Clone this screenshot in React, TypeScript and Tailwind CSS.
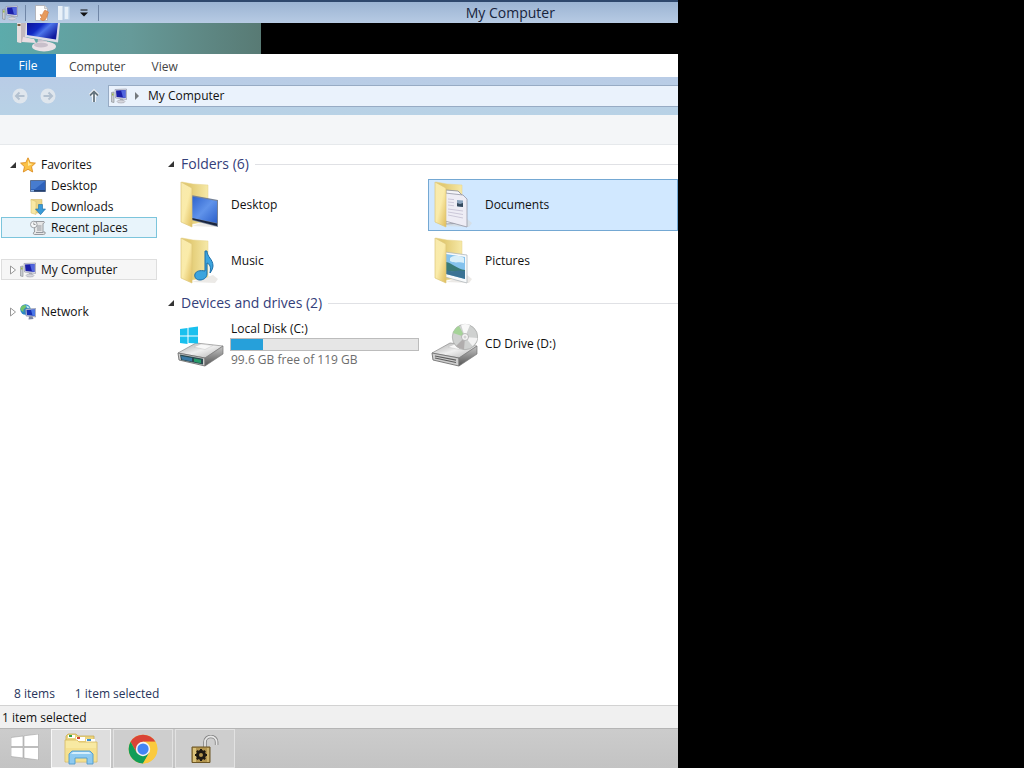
import React from 'react';

interface IconProps {
    className?: string;
}

type FolderKind = 'desktop' | 'documents' | 'music' | 'pictures';

interface FolderItem {
    name: string;
    kind: FolderKind;
    selected?: boolean;
}

const folders: FolderItem[] = [
    { name: 'Desktop', kind: 'desktop' },
    { name: 'Documents', kind: 'documents', selected: true },
    { name: 'Music', kind: 'music' },
    { name: 'Pictures', kind: 'pictures' },
];

const ComputerIcon: React.FC<IconProps> = ({ className = 'w-4 h-4' }) => (
    <svg viewBox="0 0 16 16" className={className} aria-hidden="true">
        <path d="M0.5 4.5 3 4v10.5l-2.500-.5z" fill="#c9ccd2" stroke="#85898f" strokeWidth=".6" />
        <path d="M1 5.500h1.500v2H1z" fill="#9ab84e" />
        <path d="M4 1.500 15.500 1v10.500L4.500 10z" fill="#dcdde6" stroke="#8d90a5" strokeWidth=".6" />
        <path d="M5 2.500 14.500 2v8L5.500 9z" fill="#1a1fa8" />
        <path d="M10 2.200 14.500 2v8L12 9.600z" fill="#5166de" />
        <path d="M9 11h3l.5 2H8.500z" fill="#a9abb5" />
        <ellipse cx="10" cy="13.500" rx="4" ry="1.500" fill="#d5d6dd" stroke="#9b9da8" strokeWidth=".5" />
    </svg>
);

const BigComputerIcon: React.FC = () => (
    <svg viewBox="0 0 48 31" className="w-12 h-[31px]" aria-hidden="true">
        <defs>
            <linearGradient id="bigScreen" x1="0" y1="0" x2="1" y2=".6">
                <stop offset="0" stopColor="#0d1398" />
                <stop offset=".4" stopColor="#1029c4" />
                <stop offset=".6" stopColor="#4c74ea" />
                <stop offset="1" stopColor="#101a9e" />
            </linearGradient>
        </defs>
        <path d="M1 0h10v14L5 20 1 19z" fill="#c3b9bd" />
        <path d="M1 0h4v20l-4-1z" fill="#e6dedf" />
        <path d="M1.500 1h3v2h-3z" fill="#7a5a40" />
        <path d="M7 14l11 2 2 4-14-1z" fill="#e9dde2" />
        <path d="M10 0H44l-2 19.500L9 14z" fill="#dcdde8" />
        <path d="M11 0H42l-2 16.500L11 12z" fill="url(#bigScreen)" />
        <path d="M22 16l9 2-1 5h-9z" fill="#c9c0cc" />
        <ellipse cx="28" cy="23.500" rx="12" ry="5" fill="#e9e1e6" />
        <ellipse cx="25" cy="22" rx="7" ry="2.500" fill="#c8bfca" />
    </svg>
);

const NotePageIcon: React.FC = () => (
    <svg viewBox="0 0 16 16" className="w-4 h-4" aria-hidden="true">
        <path d="M1.500.5h9l3 3v12h-12z" fill="#fff" stroke="#a9a9ae" strokeWidth=".8" />
        <path d="M10.500.5v3h3" fill="#e2e2e2" stroke="#a9a9ae" strokeWidth=".6" />
        <path d="M6 9.500 8 10c1-1 1-3 3-5l3.500 2c-1 2-1 5-3 7.500L9 16l-3-2 1.500-1.500z" fill="#e79a5c" stroke="#c9703a" strokeWidth=".5" />
    </svg>
);

const BlankFolderIcon: React.FC = () => (
    <svg viewBox="0 0 16 16" className="w-4 h-4" aria-hidden="true">
        <path d="M2 1h5v14H2z" fill="#e9f1f9" />
        <path d="M7.500 1.500h6v13h-6z" fill="#c9dcef" />
        <path d="M9 2h3v12H9z" fill="#e6eff8" />
        <path d="M7 1v14" stroke="#b5c8de" />
    </svg>
);

const StarIcon: React.FC = () => (
    <svg viewBox="0 0 16 16" className="w-4 h-4" aria-hidden="true">
        <path d="M8 .8l2.200 4.800 5.200.5-3.900 3.600 1.200 5.300L8 12.300 3.300 15l1.200-5.300L.6 6.100l5.200-.5z" fill="#fbc246" stroke="#dc8d22" strokeWidth=".9" strokeLinejoin="round" />
        <path d="M8 3l1.400 3.500 3.300.4L8 9z" fill="#ffeaa0" />
    </svg>
);

const DesktopIcon: React.FC = () => (
    <svg viewBox="0 0 16 16" className="w-4 h-4" aria-hidden="true">
        <path d="M.5 2.500h15v11H.5z" fill="#2f62bb" stroke="#5a6f92" />
        <path d="M1 3h14L5 11H1z" fill="#477ccf" />
        <path d="M1 12h14v1.500H1z" fill="#24406f" />
        <path d="M1 12h3v1.500H1z" fill="#8db5e8" />
    </svg>
);

const DownloadsIcon: React.FC = () => (
    <svg viewBox="0 0 16 16" className="w-4 h-4" aria-hidden="true">
        <path d="M1 .5h11v13.500H4z" fill="#ecd68a" stroke="#cdb05b" strokeWidth=".5" />
        <path d="M1 .5l5 2v13L1 14z" fill="#f8e8a5" stroke="#d5bd6b" strokeWidth=".5" />
        <path d="M8.500 5.500h4v4.500H15.500l-5 5.700-5-5.700h3z" fill="#3a9bd8" stroke="#1f6ea6" strokeWidth=".6" />
    </svg>
);

const RecentIcon: React.FC = () => (
    <svg viewBox="0 0 16 16" className="w-4 h-4" aria-hidden="true">
        <path d="M4 1.500h10c1 1 0 2-1 2V12H15c.5 2-.5 2.500-1.500 2.500H4.500C3 14.500 3 12 4.500 12z" fill="#e6e6e6" stroke="#8d9195" strokeWidth=".9" />
        <path d="M7 6h4.500M7 8h4.500M7 10h4.500M6 12.500h7" stroke="#8b8f95" strokeWidth=".9" />
        <circle cx="3.800" cy="4.500" r="3.300" fill="#f5f7f8" stroke="#8d9195" strokeWidth=".8" />
        <path d="M3.800 2.500v2h1.700" fill="none" stroke="#777" strokeWidth=".7" />
    </svg>
);

const NetworkIcon: React.FC = () => (
    <svg viewBox="0 0 16 16" className="w-4 h-4" aria-hidden="true">
        <circle cx="5.500" cy="5.500" r="5.200" fill="#2c86c4" />
        <path d="M2 2c3-2 5-1 4 1S3 5 3.500 7 1 7 .6 5.500 1 3 2 2z" fill="#72c46a" />
        <path d="M6 1.500c2 0 3 1 4 3L7 4z" fill="#b7e6ef" />
        <path d="M5.500 5 15.800 4.500v8.500L6 12z" fill="#c3c9da" stroke="#6c7590" strokeWidth=".5" />
        <path d="M6.500 6 15 5.500v6.500L7 11z" fill="#1630b5" />
        <path d="M11 5.700 15 5.500v6.500L12.500 11.500z" fill="#4a78e8" />
        <path d="M9 12.500h3.500l1 2.500-5 .5z" fill="#7d87a2" />
    </svg>
);

const FolderIcon: React.FC<{ kind: FolderKind }> = ({ kind }) => (
    <svg viewBox="0 0 48 48" className="w-12 h-12 shrink-0" aria-hidden="true">
        <defs>
            <linearGradient id={`back-${kind}`} x1="0" y1="0" x2="1" y2="0">
                <stop offset=".3" stopColor="#e2ca72" />
                <stop offset="1" stopColor="#f6e9a8" />
            </linearGradient>
            <linearGradient id={`flap-${kind}`} x1="0" y1="0" x2="1" y2="1">
                <stop offset="0" stopColor="#f8eaae" />
                <stop offset=".5" stopColor="#faeba9" />
                <stop offset="1" stopColor="#dfbc5a" />
            </linearGradient>
            <linearGradient id={`sheet-${kind}`} x1="0" y1="0" x2="1" y2="1">
                <stop offset="0" stopColor="#2d62cc" />
                <stop offset=".5" stopColor="#6093ea" />
                <stop offset="1" stopColor="#2b5fca" />
            </linearGradient>
        </defs>
        <path d="M16 45l23 1 3-4-5-4z" fill="#d9d6cf" opacity=".5" />
        <path d="M6 1l11 2 15 1v36l-16 3z" fill={`url(#back-${kind})`} stroke="#e6d28a" strokeWidth=".5" />
        {kind === 'desktop' && (
            <g>
                <path d="M15 14l27 5v27l-27-7z" fill="#768296" />
                <path d="M16 15.500l25 4.500v22l-25-5z" fill={`url(#sheet-${kind})`} />
                <path d="M16 37l25 5.500v2.500l-25-6.500z" fill="#19243e" />
            </g>
        )}
        {kind === 'documents' && (
            <g>
                <path d="M16 9l12 1 6 6v26l-18 1z" fill="#f4f4f8" stroke="#8a8d98" strokeWidth=".8" />
                <path d="M15 12l18 2 4 4v28l-22-6z" fill="#eeedf5" stroke="#9497a5" strokeWidth=".8" />
                <path d="M18 18l6 .6M18 21l6 .7M18 24l6 .8M18 28l15 2M18 31l15 2.500M18 34l15 3" stroke="#c3bfd2" strokeWidth=".8" />
                <path d="M27 19l6 .6v6.500l-6-.8z" fill="#8aa3bd" />
                <path d="M27 22l3 1 3-1v4l-6-.7z" fill="#34495d" />
            </g>
        )}
        {kind === 'pictures' && (
            <g>
                <path d="M15 15l22 3v28l-22-6z" fill="#f8fafb" stroke="#a9b0b5" strokeWidth=".7" />
                <path d="M16 17l19 3v22l-19-5z" fill="#84c2ed" />
                <path d="M20 21c3-3 10-3 14 0v5c-5-2-8 1-14-2z" fill="#d9effa" />
                <path d="M16 25c6 1 11 7 19 8v3l-19-2z" fill="#397a77" />
                <path d="M16 33c7 3 12-1 19 1v8l-19-5z" fill="#3a7394" />
            </g>
        )}
        <path d="M5 1l11 6v39l-11-5z" fill={`url(#flap-${kind})`} stroke="#dcc678" strokeWidth=".7" />
        {kind === 'music' && (
            <path d="M29 14h2c0 6 6 8 6 15-.3 3-1.500 5-3 7 1-6 0-9-3-10v11c0 4-4 6-7 6-4 0-6-3-5-6s5-4 10-3z" fill="#3ca4de" stroke="#1a6ea9" strokeWidth="1" />
        )}
    </svg>
);

const DriveBody: React.FC<{ id: string }> = ({ id }) => (
    <g>
        <defs>
            <linearGradient id={`top-${id}`} x1="0" y1="0" x2="1" y2="1">
                <stop offset="0" stopColor="#a9a9a9" />
                <stop offset=".5" stopColor="#efefef" />
                <stop offset="1" stopColor="#b0b0b0" />
            </linearGradient>
            <linearGradient id={`side-${id}`} x1="0" y1="0" x2="0" y2="1">
                <stop offset="0" stopColor="#c6c6c6" />
                <stop offset="1" stopColor="#555" />
            </linearGradient>
        </defs>
        <path d="M2 33 20 23l27 3-18 12z" fill={`url(#top-${id})`} stroke="#8c8c8c" strokeWidth=".7" />
        <path d="M2 33l27 5v8L3 40z" fill="#cdcdcd" stroke="#707070" strokeWidth=".9" />
        <path d="M29 38l18-12v8L29 46z" fill={`url(#side-${id})`} stroke="#777" strokeWidth=".7" />
        <path d="M18 27l7-3 12 1.500-8 4z" fill="#f8f8f8" stroke="#bbb" strokeWidth=".4" />
    </g>
);

const LocalDiskIcon: React.FC = () => (
    <svg viewBox="0 0 48 48" className="w-12 h-12 shrink-0" aria-hidden="true">
        <DriveBody id="local" />
        <path d="M4 34.500l23 4.200v5.800L5 40z" fill="#2b4a50" />
        <path d="M5 36l11 2v3.500L6 39.500z" fill="#3a79a5" />
        <path d="M18 38.500l7 1.200v3.500l-7-1.500z" fill="#279c6a" />
        <path d="M4 9l7.500-1v7.500H4zM12.500 7.800 22 6.500v9h-9.500zM4 16.500h7.500V24L4 23zM12.500 16.500H22v7l-9.500-.4z" fill="#19c0ee" />
    </svg>
);

const CdDriveIcon: React.FC = () => (
    <svg viewBox="0 0 48 48" className="w-12 h-12 shrink-0" aria-hidden="true">
        <DriveBody id="cd" />
        <path d="M5 36l21 4.200M5 38l21 4.500" stroke="#5d5d5d" strokeWidth="1.200" />
        <circle cx="35" cy="17" r="12.700" fill="#cfd1d0" stroke="#a3a5a4" strokeWidth=".7" />
        <path d="M35 17 23 13a13 13 0 0 1 6-7z" fill="#a5d398" />
        <path d="M35 17 31 4.700a13 13 0 0 1 9 .3z" fill="#f8f8f8" />
        <path d="M35 17l12.500 1a13 13 0 0 1-5 8z" fill="#f3f3f3" />
        <path d="M35 17 26 26a13 13 0 0 0 8 3.500z" fill="#b0adad" />
        <circle cx="35" cy="17" r="3.500" fill="#f5f5f5" stroke="#aaa" strokeWidth=".8" />
        <circle cx="35" cy="17" r="1.500" fill="#d2d2d2" />
    </svg>
);

const WindowsLogo: React.FC = () => (
    <svg viewBox="0 0 28 26" className="w-7 h-[26px]" aria-hidden="true">
        <path d="M0 3.500 12 2v10.500H0zM13 1.800 27.500 0v12.500H13zM0 13.500h12V24L0 22.500zM13 13.500h14.500V26L13 24.100z" fill="#fff" stroke="#a5a5a5" strokeWidth=".6" />
    </svg>
);

const ExplorerIcon: React.FC = () => (
    <svg viewBox="0 0 34 32" className="w-[34px] h-8" aria-hidden="true">
        <path d="M2 3l2-2h8l2 2h16v20H2z" fill="#ecd57e" stroke="#c9ac55" strokeWidth=".8" />
        <path d="M4 2h7v3H4z" fill="#fff" />
        <path d="M5 2h3v2H5z" fill="#36a143" />
        <path d="M12 4h9v4h-9z" fill="#fff" />
        <path d="M13 4h3v2h-3z" fill="#cf4533" />
        <path d="M22 6h9v3h-9z" fill="#fff" />
        <path d="M23 6h4v2h-4z" fill="#3e90ce" />
        <path d="M1 7h12l2 2h18v20H1z" fill="#f8e9a2" stroke="#d5b75e" strokeWidth=".8" />
        <path d="M2 15h30v13H2z" fill="#f5e08f" />
        <path d="M5 31V21l3-3h18l3 3v10h-6v-6H11v6z" fill="#8ecaf0" stroke="#4f9acb" strokeWidth=".9" />
        <path d="M7 21l2-2h16l2 2z" fill="#d5effc" />
    </svg>
);

const ChromeIcon: React.FC = () => (
    <svg viewBox="0 0 48 48" className="w-[30px] h-[30px]" aria-hidden="true">
        <circle cx="24" cy="24" r="23" fill="#fbca3e" />
        <path d="M4.100 12.500A23 23 0 0 1 43.900 12.500H24L14 29.800z" fill="#da4437" />
        <path d="M4.100 12.500A23 23 0 0 0 24 47L34 29.800 24 35.500 14 29.800z" fill="#109d58" />
        <path d="M43.900 12.500A23 23 0 0 1 24 47l10-17.200 1-11-11-6.300z" fill="#fbca3e" />
        <circle cx="24" cy="24" r="11.500" fill="#f4f4f4" />
        <circle cx="24" cy="24" r="9" fill="#4285f4" />
    </svg>
);

const PadlockIcon: React.FC = () => (
    <svg viewBox="0 0 28 28" className="w-7 h-7" aria-hidden="true">
        <path d="M14 12V7a5.800 5.500 0 0 1 11.600 0v3" fill="none" stroke="#808080" strokeWidth="3.500" />
        <path d="M14 12V7a5.800 5.500 0 0 1 11.600 0v3" fill="none" stroke="#e6e6e6" strokeWidth="1.800" />
        <path d="M1 12h18v15.500H1z" fill="#b3954e" stroke="#6b5525" />
        <path d="M2 13h3v14H2z" fill="#d9c17a" />
        <path d="M16 13h2v14h-2z" fill="#cdb36a" />
        <circle cx="10" cy="20" r="3.500" fill="none" stroke="#1e1a12" strokeWidth="3" />
        <path d="M10 14v2.500M10 23.500V26M4 20h2.500M13.500 20H16M5.800 15.800l1.700 1.700M12.500 22.500l1.700 1.700M14.200 15.800l-1.700 1.700M7.500 22.500l-1.700 1.700" stroke="#1e1a12" strokeWidth="2" />
    </svg>
);

const RoundArrow: React.FC<{ flip?: boolean }> = ({ flip }) => (
    <svg viewBox="0 0 16 16" className="w-4 h-4" aria-hidden="true">
        <circle cx="8" cy="8" r="7.500" fill="#dfe6ed" />
        {flip ? (
            <path d="M3.500 8h8M8.500 4.500 12 8l-3.500 3.500" fill="none" stroke="#b3c1d0" strokeWidth="2" />
        ) : (
            <path d="M12.500 8h-8M7.500 4.500 4 8l3.500 3.500" fill="none" stroke="#b3c1d0" strokeWidth="2" />
        )}
    </svg>
);

const OpenArrow: React.FC = () => (
    <svg viewBox="0 0 6 6" className="w-1.5 h-1.5 shrink-0" aria-hidden="true">
        <path d="M6 0v6H0z" fill="#333" />
    </svg>
);

const ClosedArrow: React.FC = () => (
    <svg viewBox="0 0 6 10" className="w-1.5 h-2.5 shrink-0" aria-hidden="true">
        <path d="M.5 1 5.500 5l-5 4z" fill="#fff" stroke="#999" />
    </svg>
);

interface TreeRowProps {
    label: string;
    icon: React.ReactNode;
    arrow?: React.ReactNode;
    className?: string;
}

const TreeRow: React.FC<TreeRowProps> = ({ label, icon, arrow, className = 'border-transparent' }) => (
    <button className={`flex items-center h-[21px] w-full border text-left ${arrow ? 'pl-2' : 'pl-7'} ${className}`}>
        {arrow && <span className="w-2.5 flex">{arrow}</span>}
        {icon}
        <span className="ml-[5px]">{label}</span>
    </button>
);

const GroupHeader: React.FC<{ title: string }> = ({ title }) => (
    <h2 className="flex items-center h-5 pl-2 text-[14px] text-[#34407a]">
        <OpenArrow />
        <span className="ml-[7px] mr-1.5 whitespace-nowrap">{title}</span>
        <span className="flex-1 h-px bg-[#e0e1e5]" />
    </h2>
);

const App: React.FC = () => {
    return (
        <div className="min-h-screen bg-black font-['Open_Sans','Noto_Sans',sans-serif] text-[12px] leading-4 text-[#111]">
            <div className="w-[66.2%] min-h-screen flex flex-col bg-white">
                <header className="h-[23px] flex items-center border-t-2 border-[#2f486d] bg-linear-to-b from-[#9cb4d3] to-[#b7cbe4]">
                    <div className="flex flex-1 items-center pl-0.5">
                        <ComputerIcon />
                        <span className="w-px h-4 ml-[7px] mr-2 bg-[#7086a6]" />
                        <button aria-label="Properties"><NotePageIcon /></button>
                        <button aria-label="New folder" className="ml-1.5"><BlankFolderIcon /></button>
                        <button aria-label="Customize toolbar" className="ml-2">
                            <svg viewBox="0 0 8 8" className="w-2 h-2" aria-hidden="true">
                                <path d="M.5 1h7" stroke="#111" />
                                <path d="M0 3.500h8L4 7.500z" fill="#111" />
                            </svg>
                        </button>
                        <span className="w-px h-4 ml-2.5 bg-[#7086a6]" />
                    </div>
                    <h1 className="pr-[123px] text-[14px] text-[#17243c]">My Computer</h1>
                </header>

                <div className="h-[31px] flex bg-black">
                    <div className="w-[261px] pl-4 bg-linear-to-r from-[#5cabab] via-[#669a99] to-[#587a74]">
                        <BigComputerIcon />
                    </div>
                </div>

                <nav className="h-[23px] flex text-[#444]">
                    <button className="w-14 bg-[#1979ca] text-white">File</button>
                    <button className="pl-[13px] pr-3 pt-0.5">Computer</button>
                    <button className="px-3.5 pt-0.5">View</button>
                </nav>

                <div className="h-[38px] flex items-center bg-linear-to-b from-[#b9cce6] to-[#b8d2e6] pl-3">
                    <button aria-label="Back"><RoundArrow /></button>
                    <button aria-label="Forward" className="ml-3"><RoundArrow flip /></button>
                    <button aria-label="Up" className="ml-8">
                        <svg viewBox="0 0 12 14" className="w-3 h-3.5" aria-hidden="true">
                            <path d="M6 13V2.500M2 6.500l4-4 4 4" fill="none" stroke="#fff" strokeWidth="3.500" />
                            <path d="M6 13V2.500M2 6.500l4-4 4 4" fill="none" stroke="#66757f" strokeWidth="1.800" />
                        </svg>
                    </button>
                    <div className="flex flex-1 items-center h-[22px] ml-2 pl-0.5 border border-r-0 border-[#97abc4] bg-[#eaf2fc]">
                        <ComputerIcon />
                        <svg viewBox="0 0 4 8" className="w-1 h-2 mx-2" aria-hidden="true">
                            <path d="M0 0l4 4-4 4z" fill="#74797e" />
                        </svg>
                        <span className="pl-px">My Computer</span>
                    </div>
                </div>

                <div className="h-[30px] bg-[#f4f6f8] border-b border-[#e6e9ec]" />

                <div className="flex flex-1">
                    <aside className="w-[157px] shrink-0 pt-[9px] pl-px">
                        <TreeRow label="Favorites" icon={<StarIcon />} arrow={<OpenArrow />} />
                        <TreeRow label="Desktop" icon={<DesktopIcon />} />
                        <TreeRow label="Downloads" icon={<DownloadsIcon />} />
                        <TreeRow label="Recent places" icon={<RecentIcon />} className="border-[#7cc5dc] bg-[#e8f4fb]" />
                        <div className="h-[21px]" />
                        <TreeRow label="My Computer" icon={<ComputerIcon />} arrow={<ClosedArrow />} className="border-[#dedede] bg-[#f6f6f6]" />
                        <div className="h-[21px]" />
                        <TreeRow label="Network" icon={<NetworkIcon />} arrow={<ClosedArrow />} />
                    </aside>

                    <main className="flex-1 ml-[3px] pt-[9px]">
                        <GroupHeader title="Folders (6)" />
                        <div className="grid grid-cols-2 gap-1 mt-[5px] pl-3.5">
                            {folders.map(f => (
                                <button
                                    key={f.name}
                                    className={`flex items-center h-[52px] gap-[7px] pl-px border text-left ${f.selected ? 'border-[#74a8d3] bg-[#d1e8ff]' : 'border-transparent'}`}
                                >
                                    <FolderIcon kind={f.kind} />
                                    {f.name}
                                </button>
                            ))}
                        </div>

                        <div className="mt-1.5">
                            <GroupHeader title="Devices and drives (2)" />
                        </div>
                        <div className="grid grid-cols-2 gap-1 mt-[7px] pl-3.5">
                            <button className="flex items-center gap-1.5 pl-0.5 text-left">
                                <LocalDiskIcon />
                                <span className="w-[189px]">
                                    <span className="block pl-px">Local Disk (C:)</span>
                                    <span className="block h-[13px] mt-px border border-[#bcbcbc] bg-[#e6e6e6]">
                                        <span className="block w-[17%] h-full bg-[#26a0da]" />
                                    </span>
                                    <span className="block pl-px pt-px text-[#6d6d6d]">99.6 GB free of 119 GB</span>
                                </span>
                            </button>
                            <button className="flex items-center gap-[7px] pl-0.5 text-left">
                                <CdDriveIcon />
                                CD Drive (D:)
                            </button>
                        </div>
                    </main>
                </div>

                <div className="h-[23px] flex items-center gap-5 pl-3.5 text-[#27355c]">
                    <span>8 items</span>
                    <span>1 item selected</span>
                </div>
                <div className="h-[23px] flex items-center pl-0.5 pt-px border-t border-[#d2d2d2] bg-[#f0f0f0]">
                    1 item selected
                </div>

                <footer className="h-10 flex gap-0.5 bg-linear-to-b from-[#cccccc] to-[#c3c3c3] border-t border-[#b5b5b5]">
                    <button aria-label="Start" className="w-[49px] pb-1 flex items-center justify-center"><WindowsLogo /></button>
                    <button aria-label="File Explorer" className="w-[60px] flex items-center justify-center border border-[#f7f7f7] bg-[#dedede]"><ExplorerIcon /></button>
                    <button aria-label="Chrome" className="w-[60px] flex items-center justify-center border border-[#e2e2e2] bg-[#cecece]"><ChromeIcon /></button>
                    <button aria-label="Unlocker" className="w-[60px] flex items-center justify-center border border-[#e2e2e2] bg-[#cecece]"><PadlockIcon /></button>
                </footer>
            </div>
        </div>
    );
};

export default App;
